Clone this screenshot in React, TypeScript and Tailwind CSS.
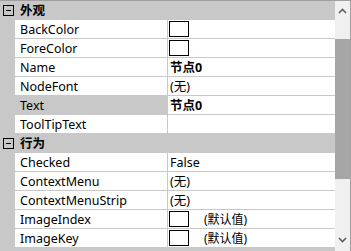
import React from 'react';

type Row =
  | { kind: 'cat'; label: string }
  | { kind: 'prop'; name: string; value?: string; bold?: boolean; swatch?: boolean; selected?: boolean };

const rows: Row[] = [
  { kind: 'cat', label: '外观' },
  { kind: 'prop', name: 'BackColor', swatch: true },
  { kind: 'prop', name: 'ForeColor', swatch: true },
  { kind: 'prop', name: 'Name', value: '节点0', bold: true },
  { kind: 'prop', name: 'NodeFont', value: '(无)' },
  { kind: 'prop', name: 'Text', value: '节点0', bold: true, selected: true },
  { kind: 'prop', name: 'ToolTipText' },
  { kind: 'cat', label: '行为' },
  { kind: 'prop', name: 'Checked', value: 'False' },
  { kind: 'prop', name: 'ContextMenu', value: '(无)' },
  { kind: 'prop', name: 'ContextMenuStrip', value: '(无)' },
  { kind: 'prop', name: 'ImageIndex', value: '(默认值)', swatch: true },
  { kind: 'prop', name: 'ImageKey', value: '(默认值)', swatch: true },
];

function Minus() {
  return (
    <svg width="11" height="11" viewBox="0 0 11 11" className="shrink-0">
      <rect x="0.5" y="0.5" width="10" height="10" fill="none" stroke="#000" />
      <line x1="3" y1="5.5" x2="8" y2="5.5" stroke="#000" />
    </svg>
  );
}

function App() {
  return (
    <div
      className="w-[351px] h-[251px] bg-[#c8c8c8] border-t border-r border-[#a0a0a0] flex text-[12.5px] text-black overflow-hidden"
      style={{ fontFamily: '"Noto Sans", "Noto Sans CJK SC", sans-serif' }}
    >
      <div className="flex-1 flex flex-col">
        {rows.map((r, i) =>
          r.kind === 'cat' ? (
            <div key={i} className="h-[19px] flex items-center bg-[#c8c8c8] shrink-0">
              <div className="w-[15px] pl-[3px] flex items-center">
                <Minus />
              </div>
              <span className="pl-[5px] pt-[2px] font-bold leading-none">{r.label}</span>
            </div>
          ) : (
            <div key={i} className="h-[19px] flex shrink-0">
              <div className="w-[15px] bg-[#c8c8c8]" />
              <div
                className={`w-[153px] flex items-center pl-[5px] border-b border-r border-[#c8c8c8] ${
                  r.selected ? 'bg-[#c8c8c8]' : 'bg-white'
                }`}
              >
                <span className="leading-none pt-[2px]">{r.name}</span>
              </div>
              <div className="flex-1 flex items-center bg-white border-b border-[#c8c8c8] pl-[1px]">
                {r.swatch && <div className="w-[20px] h-[16px] border border-black bg-white shrink-0" />}
                {r.value && (
                  <span
                    className={`leading-none pt-[2px] ${r.swatch ? 'pl-[15px] text-[12px]' : 'pl-[1px]'} ${
                      r.bold ? 'font-bold' : ''
                    }`}
                  >
                    {r.value}
                  </span>
                )}
              </div>
            </div>
          )
        )}
      </div>
      <div className="w-[15px] bg-[#f0f0f0] flex flex-col items-center">
        <div className="h-[38px] w-full flex justify-center pt-[7px]">
          <svg width="9" height="6" viewBox="0 0 9 6">
            <path d="M1 5 L4.5 1.5 L8 5" fill="none" stroke="#606060" strokeWidth="1.6" />
          </svg>
        </div>
        <div className="h-[140px] w-full bg-[#a6a6a6]" />
        <div className="flex-1" />
        <div className="h-[18px] w-full flex justify-center pt-[4px]">
          <svg width="9" height="6" viewBox="0 0 9 6">
            <path d="M1 1 L4.5 4.5 L8 1" fill="none" stroke="#606060" strokeWidth="1.6" />
          </svg>
        </div>
      </div>
    </div>
  );
}

export default App;
